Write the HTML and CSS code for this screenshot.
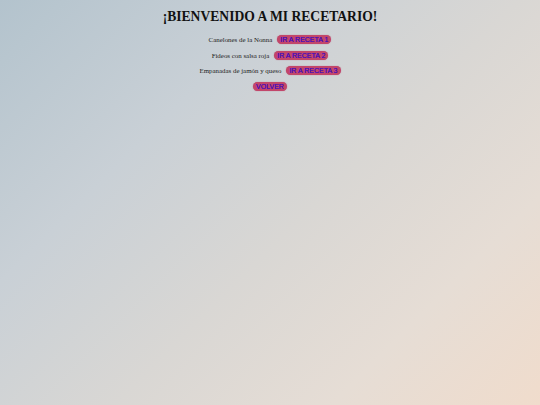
FILE: index.html
```html
<!DOCTYPE html>
<html lang="es">
<head>
<meta charset="utf-8">
<title>Recetario</title>
<link rel="stylesheet" href="styles.css">
</head>
<body>
<main class="page">
  <h1 class="title">¡BIENVENIDO A MI RECETARIO!</h1>
  <ul class="list">
    <li class="row"><span class="name">Canelones de la Nonna</span><a class="btn" href="#">IR A RECETA 1</a></li>
    <li class="row"><span class="name">Fideos con salsa roja</span><a class="btn" href="#">IR A RECETA 2</a></li>
    <li class="row"><span class="name">Empanadas de jamón y queso</span><a class="btn" href="#">IR A RECETA 3</a></li>
    <li class="row"><a class="btn" href="#">VOLVER</a></li>
  </ul>
</main>
</body>
</html>
```

FILE: styles.css
```css
html, body {
  margin: 0;
  height: 100%;
}
body {
  background: linear-gradient(135deg, #b3c3cd 0%, #c9d0d6 30%, #d9d7d4 55%, #e6ddd5 78%, #f0dccc 100%);
  font-family: "Liberation Serif", "Times New Roman", serif;
  color: #1a1a1a;
}
.page {
  display: flex;
  flex-direction: column;
  align-items: center;
  padding-top: 7px;
}
.title {
  margin: 0;
  font-size: 13.6px;
  font-weight: bold;
  color: #111;
  line-height: 20px;
  transform: scaleY(1.1);
}
.list {
  list-style: none;
  margin: 8px 0 0;
  padding: 0;
  display: flex;
  flex-direction: column;
  align-items: center;
  gap: 6.7px;
}
.row {
  display: flex;
  align-items: center;
  gap: 5px;
  font-size: 6.9px;
  height: 9px;
}
.name {
  color: #1c1c1c;
}
.btn {
  display: inline-block;
  background: #c2466a;
  color: #4a12b8;
  font-family: "Liberation Sans", Arial, sans-serif;
  font-size: 7px;
  line-height: 9px;
  padding: 0 3px;
  border-radius: 5px;
  text-decoration: none;
  text-shadow: 0 0 0.4px #4a12b8;
  box-shadow: 0 0 1px rgba(170, 50, 90, 0.7);
}
```
